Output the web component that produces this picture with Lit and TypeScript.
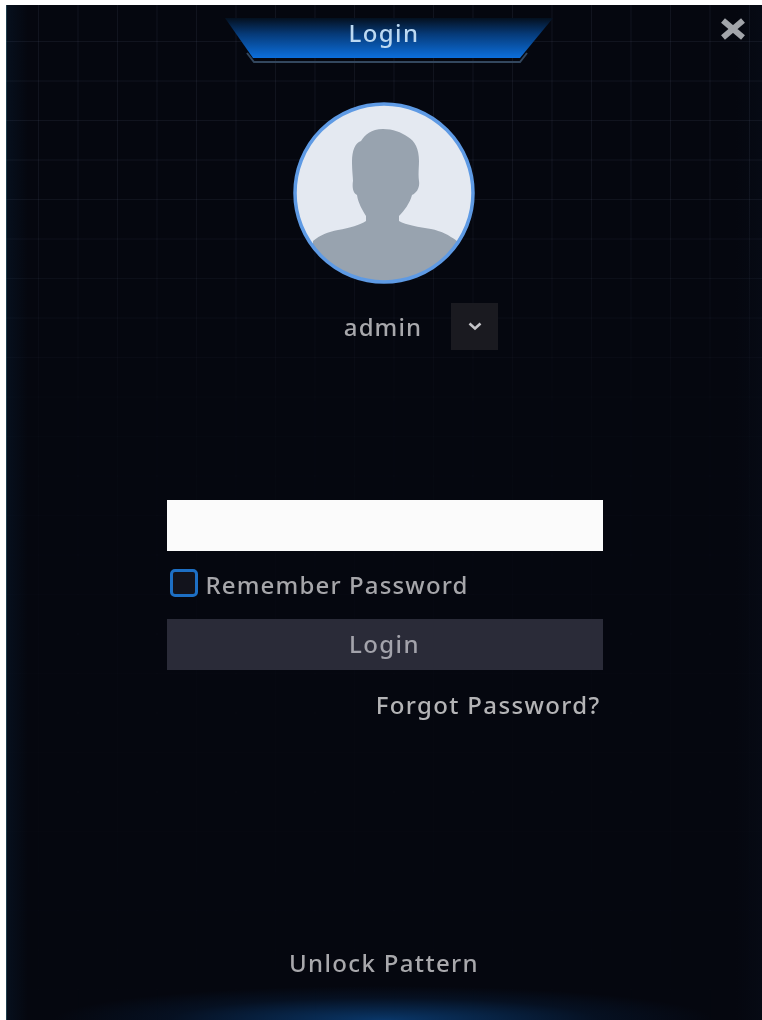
import { LitElement, html, css } from "lit";
import { customElement } from "lit/decorators.js";

@customElement("app-root")
export class AppRoot extends LitElement {
  static styles = css`
    :host {
      display: block;
      width: 762px;
      height: 1020px;
      background: #ffffff;
      padding: 5px 0 0 6px;
      box-sizing: border-box;
      font-family: "Noto Sans", "Open Sans", sans-serif;
      font-weight: 500;
    }
    .panel {
      position: relative;
      width: 756px;
      height: 1015px;
      overflow: hidden;
      background:
        radial-gradient(ellipse 330px 34px at 50% 100%, rgba(12, 84, 160, 0.62), rgba(8, 50, 100, 0.22) 65%, transparent 100%),
        linear-gradient(90deg, #06101e 0, #05070f 22px, #05070f 730px, #060a14 100%);
      display: flex;
      flex-direction: column;
      align-items: center;
      box-shadow: inset 1px 0 0 rgba(90, 170, 190, 0.3);
      filter: blur(0.55px);
    }
    .grid {
      position: absolute;
      inset: 0;
      background-image:
        linear-gradient(90deg, rgba(120, 130, 160, 0.11) 1px, transparent 1px),
        linear-gradient(0deg, rgba(120, 130, 160, 0.11) 1px, transparent 1px);
      background-size: 39.5px 39.5px;
      background-position: 32px 37px;
      -webkit-mask-image: linear-gradient(180deg, #000 0, #000 170px, rgba(0, 0, 0, 0.2) 400px, rgba(0, 0, 0, 0.08) 100%);
      mask-image: linear-gradient(180deg, #000 0, #000 170px, rgba(0, 0, 0, 0.2) 400px, rgba(0, 0, 0, 0.08) 100%);
      pointer-events: none;
    }
    .close {
      position: absolute;
      top: 13px;
      right: 16px;
      width: 26px;
      height: 22px;
    }
    .title {
      position: relative;
      margin: 12px 0 0 0;
      width: 336px;
      height: 46px;
      display: flex;
      justify-content: center;
    }
    .title svg {
      position: absolute;
      inset: 0;
      overflow: visible;
    }
    .title span {
      position: relative;
      font-size: 24px;
      line-height: 32px;
      color: #bcd9f2;
      letter-spacing: 1.4px;
    }
    .avatar {
      position: relative;
      margin-top: 40px;
      width: 180px;
      height: 180px;
      display: block;
      overflow: visible;
    }
    .user {
      position: relative;
      display: flex;
      align-items: center;
      margin: 20px 0 0 74px;
      gap: 29px;
    }
    .user .name {
      font-size: 24px;
      line-height: 47px;
      color: #a8a8ac;
      letter-spacing: 1.1px;
    }
    .drop {
      width: 47px;
      height: 47px;
      background: #1a1a20;
      display: flex;
      align-items: center;
      justify-content: center;
    }
    .form {
      position: relative;
      width: 436px;
      margin: 150px 0 0 1px;
      display: flex;
      flex-direction: column;
    }
    .input {
      height: 51px;
      background: #fbfbfb;
    }
    .remember {
      display: flex;
      align-items: center;
      gap: 8px;
      margin: 17px 0 0 3px;
      height: 29px;
    }
    .check {
      width: 28px;
      height: 28px;
      box-sizing: border-box;
      border: 3px solid #1d6fc4;
      border-radius: 5px;
      background: #12131c;
    }
    .remember span {
      font-size: 24px;
      color: #a6a6aa;
      letter-spacing: 1.15px;
      line-height: 28px;
      padding-top: 4px;
    }
    .btn {
      margin-top: 22px;
      height: 51px;
      background: #2a2b38;
      color: #a3a3ab;
      font-size: 24px;
      letter-spacing: 1.4px;
      display: flex;
      align-items: center;
      justify-content: center;
      padding-bottom: 2px;
      box-sizing: border-box;
    }
    .forgot {
      align-self: flex-end;
      margin: 19px 2px 0 0;
      font-size: 24px;
      line-height: 32px;
      color: #b4b4b6;
      letter-spacing: 1.35px;
    }
    .unlock {
      position: relative;
      margin: auto 0 41px 0;
      font-size: 24px;
      line-height: 32px;
      color: #a8a8ac;
      letter-spacing: 1.35px;
    }
  `;

  render() {
    return html`
      <div class="panel">
        <div class="grid"></div>
        <svg class="close" viewBox="0 0 26 22">
          <path d="M3 2.5 L23 19.5 M23 2.5 L3 19.5" stroke="#a2a5aa" stroke-width="6" fill="none" />
        </svg>
        <div class="title">
          <svg viewBox="0 0 336 46" width="336" height="46">
            <defs>
              <linearGradient id="tg" x1="0" y1="0" x2="0" y2="1">
                <stop offset="0" stop-color="#04101f" />
                <stop offset="0.4" stop-color="#063a78" />
                <stop offset="1" stop-color="#0c6fdc" />
              </linearGradient>
            </defs>
            <path d="M9 1 H337 L304 41 H37 Z" fill="url(#tg)" />
            <path d="M31 36 L38 45 H304 L311 36" fill="none" stroke="#33475e" stroke-width="2" />
          </svg>
          <span>Login</span>
        </div>
        <svg class="avatar" viewBox="0 0 180 180">
          <defs>
            <clipPath id="ac"><circle cx="90" cy="90" r="88" /></clipPath>
          </defs>
          <circle cx="90" cy="90" r="89" fill="#e4e9f1" />
          <g clip-path="url(#ac)">
            <path
              d="M89 26 C77 26 71 32 67 38 C61 40 58 48 58 58 C58 68 59 74 59 78 C58 84 59 90 63 92 C64 100 69 108 72 113 L72 118 C66 122 56 125 44 127 C34 129 26 132 19 138 L19 185 H163 L163 138 C155 132 147 128 137 126 C125 124 112 122 105 118 L105 113 C110 108 116 100 118 92 C123 90 126 84 125 78 C124 72 125 64 125 58 C125 46 121 38 114 34 C107 29 99 26 89 26 Z"
              fill="#98a3af"
            />
          </g>
          <circle cx="90" cy="90" r="89" fill="none" stroke="#5e9ae4" stroke-width="3.5" />
        </svg>
        <div class="user">
          <span class="name">admin</span>
          <div class="drop">
            <svg width="14" height="9" viewBox="0 0 14 9">
              <path d="M1.5 1.5 L7 6.5 L12.5 1.5" fill="none" stroke="#c4c4c8" stroke-width="2.6" />
            </svg>
          </div>
        </div>
        <div class="form">
          <div class="input"></div>
          <div class="remember">
            <div class="check"></div>
            <span>Remember Password</span>
          </div>
          <div class="btn">Login</div>
          <div class="forgot">Forgot Password?</div>
        </div>
        <div class="unlock">Unlock Pattern</div>
      </div>
    `;
  }
}
